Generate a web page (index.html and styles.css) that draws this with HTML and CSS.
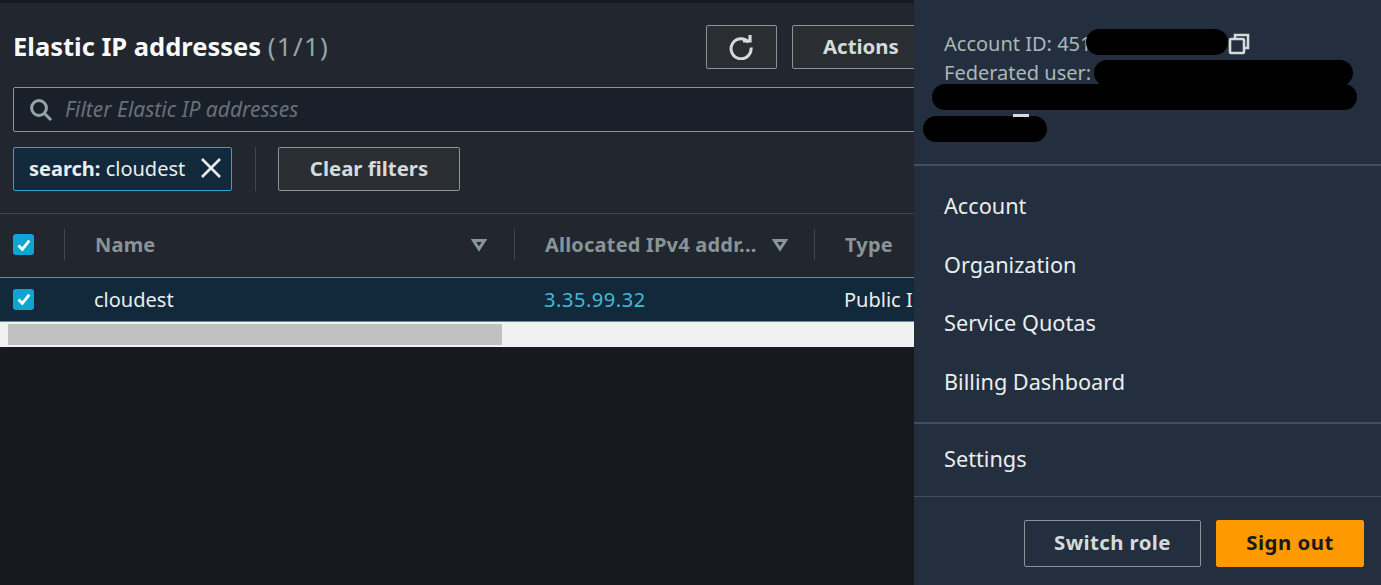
FILE: index.html
```html
<!DOCTYPE html>
<html lang="en">
<head>
    <meta charset="UTF-8">
    <meta name="viewport" content="width=device-width, initial-scale=1.0">
    <title>Elastic IP addresses</title>
    <link rel="stylesheet" href="styles.css">
</head>
<body>
<div class="page">
    <div class="main">
        <div class="panel">
            <div class="panel-head">
                <div class="title-row">
                    <h1>Elastic IP addresses <span class="count">(1/1)</span></h1>
                    <button class="btn btn-icon">
                        <svg width="26" height="26" viewBox="1 0 26 26" fill="none" stroke="#d5dbdb" stroke-width="3">
                            <path d="M20.6 8.2A10 10 0 1 0 23 13.5"/>
                            <path d="M15 7h7V1" stroke-width="3.2"/>
                        </svg>
                    </button>
                    <button class="btn btn-actions">Actions</button>
                </div>
                <div class="search">
                    <svg width="24" height="24" viewBox="1 0 24 24" fill="none" stroke="#95a5a6" stroke-width="3">
                        <circle cx="10" cy="10" r="7.4"/>
                        <path d="M15.5 15.5l6.5 6.5"/>
                    </svg>
                    <span>Filter Elastic IP addresses</span>
                </div>
                <div class="filter-row">
                    <div class="chip">
                        <span><b>search:</b> cloudest</span>
                        <svg width="20" height="20" viewBox="0 0 20 20" fill="none" stroke="#eaeded" stroke-width="2.6">
                            <path d="M1 1l18 18M19 1L1 19"/>
                        </svg>
                    </div>
                    <div class="filter-sep"></div>
                    <button class="btn btn-clear">Clear filters</button>
                </div>
            </div>
            <div class="table">
                <div class="row row-head">
                    <div class="cell cell-check">
                        <span class="check"><svg width="16" height="16" viewBox="0 0 16 16" fill="none" stroke="#fff" stroke-width="2.8"><path d="M2.5 8.5l3.8 3.8 7-8.6"/></svg></span>
                    </div>
                    <div class="cell cell-name">
                        <span>Name</span>
                        <svg class="sort" width="16" height="14" viewBox="0 0 16 14" fill="none" stroke="#879596" stroke-width="3"><path d="M2.5 2.5h11L8 11z"/></svg>
                    </div>
                    <div class="cell cell-ip">
                        <span>Allocated IPv4 addr...</span>
                        <svg class="sort" width="16" height="14" viewBox="0 0 16 14" fill="none" stroke="#879596" stroke-width="3"><path d="M2.5 2.5h11L8 11z"/></svg>
                    </div>
                    <div class="cell cell-type"><span>Type</span></div>
                </div>
                <div class="row row-selected">
                    <div class="cell cell-check">
                        <span class="check"><svg width="16" height="16" viewBox="0 0 16 16" fill="none" stroke="#fff" stroke-width="2.8"><path d="M2.5 8.5l3.8 3.8 7-8.6"/></svg></span>
                    </div>
                    <div class="cell cell-name">cloudest</div>
                    <div class="cell cell-ip"><a href="#">3.35.99.32</a></div>
                    <div class="cell cell-type">Public IP</div>
                </div>
            </div>
            <div class="scrollbar"><div class="thumb"></div></div>
        </div>
    </div>

    <aside class="menu">
        <div class="account">
            <div class="account-line">Account ID: 451<svg class="copy" width="22" height="22" viewBox="0 0 22 22" fill="none" stroke="#d5dbdb" stroke-width="2.6"><path d="M7 5V2h13v13h-4"/><rect x="2" y="6" width="14" height="14" rx="1"/></svg></div>
            <div class="account-line">Federated user:</div>
            <i class="redact r1"></i>
            <i class="redact r2"></i>
            <i class="redact r3"></i>
            <i class="redact r4"></i>
            <i class="stray"></i>
        </div>
        <nav class="links">
            <a href="#">Account</a>
            <a href="#">Organization</a>
            <a href="#">Service Quotas</a>
            <a href="#">Billing Dashboard</a>
        </nav>
        <nav class="links links-settings">
            <a href="#">Settings</a>
        </nav>
        <div class="menu-foot">
            <button class="btn btn-switch">Switch role</button>
            <button class="btn btn-signout">Sign out</button>
        </div>
    </aside>
</div>
</body>
</html>
```

FILE: styles.css
```css
* {
    box-sizing: border-box;
}
html, body {
    height: 100%;
}
body {
    margin: 0;
    background-color: #16191f;
    font-family: "Noto Sans", "Open Sans", sans-serif;
    color: #eaeded;
    overflow: hidden;
}
.page {
    display: flex;
    height: 585px;
}
.main {
    width: 914px;
    flex-shrink: 0;
    padding-top: 3px;
    overflow: hidden;
}
.panel {
    width: 914px;
    background: #22262e;
}
.panel-head {
    padding: 22px 0 22px 13px;
    border-bottom: 1px solid #414750;
}
.title-row {
    display: flex;
    align-items: center;
    height: 44px;
    white-space: nowrap;
}
h1 {
    margin: 0 auto 2px 0;
    font-size: 25.5px;
    font-weight: 700;
    color: #fafafa;
}
.count {
    font-weight: 400;
    font-size: 26px;
    letter-spacing: 1.3px;
    color: #95a5a6;
}
.btn {
    font-family: inherit;
    font-weight: 700;
    font-size: 20.4px;
    background: #2a2e33;
    color: #d5dbdb;
    border: 1px solid #879596;
    border-radius: 2px;
    padding: 0 0 2px;
    cursor: pointer;
}
.btn-icon {
    width: 71px;
    height: 44px;
    margin-right: 15px;
    padding: 0;
    display: flex;
    align-items: center;
    justify-content: center;
}
.btn-actions {
    width: 136px;
    height: 44px;
    margin-right: -14px;
    text-align: left;
    padding-left: 30px;
}
.search {
    display: flex;
    align-items: center;
    gap: 11px;
    height: 45px;
    margin-top: 18px;
    margin-right: -20px;
    padding-left: 16px;
    background: #1a2029;
    border: 1px solid #879596;
    border-radius: 2px;
    font-size: 21px;
    font-style: italic;
    color: #687078;
}
.search span {
    margin-bottom: 1px;
}
.filter-row {
    display: flex;
    align-items: center;
    height: 44px;
    margin-top: 15px;
}
.chip {
    display: flex;
    align-items: center;
    justify-content: space-between;
    width: 219px;
    height: 44px;
    padding: 0 10px 2px 15px;
    background: #12293b;
    border: 1px solid #2ca6cf;
    border-radius: 2px;
    font-size: 20px;
    white-space: nowrap;
}
.filter-sep {
    width: 1px;
    height: 44px;
    margin: 0 22px 0 23px;
    background: #414750;
}
.btn-clear {
    width: 182px;
    height: 44px;
}
.row {
    display: flex;
    align-items: center;
}
.row-head {
    height: 63px;
    padding-bottom: 2px;
    font-size: 20px;
    font-weight: 700;
    letter-spacing: 0.2px;
    color: #879596;
}
.row-selected {
    height: 45px;
    font-size: 20px;
    background: #12293b;
    border-top: 1px solid #2ca6cf;
    border-bottom: 1px solid #2ca6cf;
    color: #eaeded;
}
.cell {
    display: flex;
    align-items: center;
    height: 31px;
    white-space: nowrap;
}
.row-head .cell + .cell {
    border-left: 1px solid #414750;
}
.cell-check {
    width: 64px;
    padding-left: 13px;
}
.cell-name {
    width: 450px;
    padding-left: 30px;
    padding-right: 27px;
    justify-content: space-between;
}
.cell-ip {
    width: 300px;
    padding-left: 30px;
    padding-right: 26px;
    justify-content: space-between;
}
.cell-type {
    width: 100px;
    padding-left: 30px;
    overflow: hidden;
}
.row-selected .cell {
    margin-bottom: 1px;
}
.check {
    display: flex;
    align-items: center;
    justify-content: center;
    width: 21px;
    height: 21px;
    background: #0ea5d3;
    border-radius: 3px;
}
a {
    color: #44b9d6;
    text-decoration: none;
    letter-spacing: 0.55px;
}
.scrollbar {
    height: 25px;
    padding: 2px 0 2px 8px;
    background: #f1f1f1;
}
.thumb {
    width: 494px;
    height: 21px;
    background: #c1c1c1;
}
.menu {
    position: relative;
    display: flex;
    flex-direction: column;
    width: 467px;
    height: 585px;
    background: #232f3e;
}
.account {
    height: 166px;
    padding: 29px 30px 0;
    border-bottom: 2px solid #414e5c;
    font-size: 20px;
    line-height: 29px;
    color: #aab7b8;
}
.account-line {
    display: flex;
    align-items: center;
    height: 29px;
}
.copy {
    position: absolute;
    left: 314px;
    top: 33px;
}
.redact {
    position: absolute;
    background: #000;
    border-radius: 13px;
    height: 26px;
}
.r1 { left: 172px; top: 29px; width: 142px; }
.r2 { left: 180px; top: 60px; width: 259px; }
.r3 { left: 18px; top: 84px; width: 425px; }
.r4 { left: 9px; top: 116px; width: 124px; }
.stray {
    position: absolute;
    left: 99px;
    top: 114px;
    width: 16px;
    height: 3px;
    background: #d5dbdb;
}
.links {
    display: flex;
    flex-direction: column;
    padding: 10.4px 30px 11.6px;
    border-bottom: 2px solid #414e5c;
}
.links a {
    display: flex;
    align-items: center;
    height: 58.5px;
    font-size: 21.7px;
    letter-spacing: 0;
    color: #eaeded;
}
.links-settings {
    padding: 5px 30px 8.5px;
    border-bottom: 1px solid #414e5c;
}
.menu-foot {
    display: flex;
    justify-content: flex-end;
    gap: 15px;
    padding: 23px 17px 0 0;
}
.btn-switch {
    width: 177px;
    height: 47px;
    background: transparent;
    letter-spacing: 0.4px;
}
.btn-signout {
    width: 148px;
    height: 47px;
    background: #ff9900;
    border-color: #ff9900;
    color: #16191f;
    letter-spacing: 0.5px;
}
```
